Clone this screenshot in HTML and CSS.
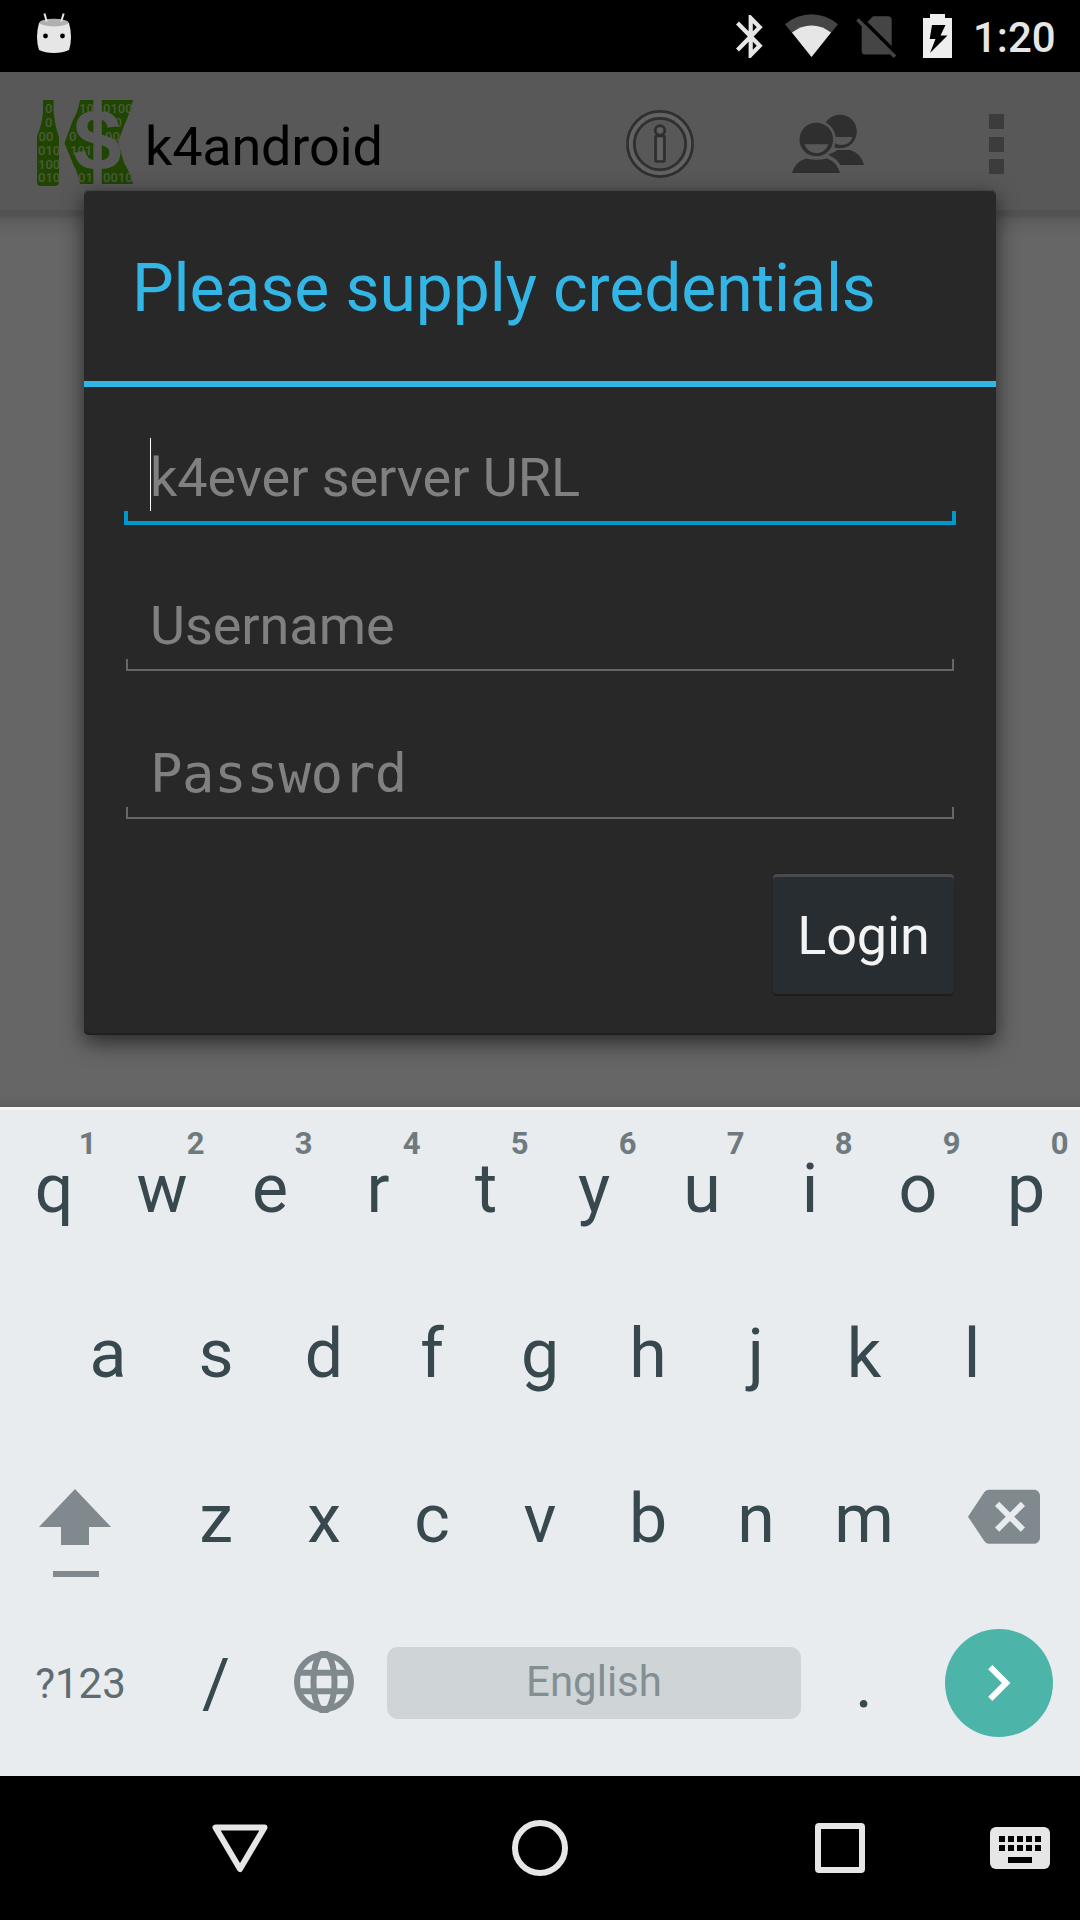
FILE: index.html
```html
<!DOCTYPE html>
<html lang="en">
<head>
<meta charset="utf-8">
<title>k4android</title>
<link rel="stylesheet" href="styles.css">
</head>
<body>
<div class="statusbar">
  <svg class="notification" width="36" height="42" viewBox="36 12 36 42">
    <path d="M39 23Q54 17 69 23Q71 30 71 37Q71 44 69 50Q63 53 54 53Q45 53 39 50Q37 44 37 37Q37 30 39 23Z" fill="#e6e6e6"/>
    <ellipse cx="54" cy="22.6" rx="14.6" ry="3.8" fill="#b0b0b0"/>
    <path d="M44.4 13.5L46.8 21.5M63.7 13.5L61.2 21.5" stroke="#e6e6e6" stroke-width="2"/>
    <circle cx="45.5" cy="36" r="2.4"/><circle cx="62.5" cy="36" r="2.4"/>
  </svg>
  <svg width="28" height="46" viewBox="735 13 28 46">
    <path transform="translate(725.5 10.7) scale(2.1 2.15)" fill="#e6e6e6" d="M17.71 7.71L12 2h-1v7.59L6.41 5 5 6.41 10.59 12 5 17.59 6.41 19 11 14.41V22h1l5.71-5.71-4.3-4.29 4.3-4.29zM13 5.83l1.88 1.88L13 9.59V5.83zm1.88 10.46L13 18.17v-3.76l1.88 1.88z"/>
  </svg>
  <svg class="wifi" width="54" height="46" viewBox="785 13 54 46">
    <path d="M785 24.3Q797 14.3 811.5 14.3Q826 14.3 838 24.3L811.5 57Z" fill="#454545"/>
    <path d="M792 32.6Q801 25.6 811.5 25.6Q822 25.6 831 32.6L811.5 57Z" fill="#e6e6e6"/>
  </svg>
  <svg class="sim" width="42" height="46" viewBox="855 13 42 46">
    <path d="M867.5 22L873 16.3H888Q891.7 16.5 891.7 20V46Z" fill="#454545"/>
    <path d="M861.7 24.5L890.5 54.5H865.5Q861.7 54.5 861.7 51Z" fill="#454545"/>
    <path d="M857.5 19.5L895 56.8" stroke="#454545" stroke-width="3.6"/>
  </svg>
  <svg class="battery" width="30" height="46" viewBox="923 13 30 46">
    <path d="M930 18V14H945V18H952V58H923V18Z" fill="#eee"/>
    <path d="M932 25H945.5L940.5 35.5H947.5L930 53L935.5 39H929.7Z" fill="#000"/>
  </svg>
  <span class="clock">1:20</span>
</div>

<div class="app">
  <header class="appbar">
    <svg class="logo" width="96" height="87" viewBox="37 100 96 87">
      <g fill="#1f4500">
        <path d="M43 100H53.500V112Q55 126 59 138V182Q59 186 54 186H41Q37 186 37 182V136Q42 125 43 112Z"/>
        <path d="M80 100H133Q129 115 124 126L118 142L124 163Q130 172 133 184H80Q77 170 73.500 165L64.500 143L73 120Q78 112 80 100Z"/>
      </g>
      <g class="bits">
        <text x="45" y="113">0</text><text x="45" y="127">0</text><text x="38.500" y="141">00</text>
        <text x="38" y="154.500">010</text><text x="38" y="168.500">100</text><text x="38" y="182">010</text>
        <text x="79" y="113">10</text><text x="103" y="113">0100</text>
        <text x="107" y="127">00</text>
        <text x="69" y="141">0</text><text x="105" y="141">00</text>
        <text x="70" y="154.500">101</text>
        <text x="78" y="182">01</text><text x="103" y="182">0010</text>
      </g>
      <text class="dollar" x="97.500" y="171" text-anchor="middle">$</text>
      <rect x="93.300" y="100" width="8.500" height="86" fill="#585858"/>
    </svg>
    <h1 class="app-name">k4android</h1>
    <div class="actions">
      <svg width="70" height="70" viewBox="625 109 70 70" fill="none" stroke="#2f2f2f">
        <g stroke="#626262" stroke-width="5"><circle cx="660" cy="144" r="30"/><path d="M660 137V160M660 128V132"/></g>
        <g stroke-width="2.700"><circle cx="660" cy="144" r="32.600"/><circle cx="660" cy="144" r="25.600"/>
        <circle cx="660" cy="130.500" r="4.800"/><rect x="655.500" y="136" width="9" height="25.500" rx="1"/></g>
      </svg>
      <svg class="people" width="74" height="60" viewBox="791 114 74 60">
        <g fill="#2f2f2f">
          <circle cx="840" cy="131.500" r="16.800"/>
          <path d="M828 154Q834 153 837 150H850Q861 153 864 165H838Z"/>
        </g>
        <path d="M835.500 137H852.500Q850 145 841 145Q838 145 835 143Z" fill="#585858"/>
        <circle cx="816.300" cy="139.500" r="19.500" fill="#585858"/>
        <path d="M806 155H827Q840 158 843 173H824Z" fill="#585858"/>
        <circle cx="816.300" cy="139.500" r="16.800" fill="#2f2f2f"/>
        <path d="M804.500 144.300H828.500Q825 153.200 816.500 153.200Q808 153.200 804.500 144.300Z" fill="#585858"/>
        <path d="M792 173Q795 162 806 158.500Q816 161 827 158.500Q837 162 840 173Z" fill="#2f2f2f"/>
      </svg>
      <div class="overflow"><i></i><i></i><i></i></div>
    </div>
  </header>
  <main class="content"></main>

  <section class="dialog">
    <h2 class="dialog-title">Please supply credentials</h2>
    <form class="credentials">
      <div class="field focused"><span class="hint">k4ever server URL</span></div>
      <div class="field"><span class="hint">Username</span></div>
      <div class="field"><span class="hint mono">Password</span></div>
      <button class="login" type="button">Login</button>
    </form>
  </section>
</div>

<div class="keyboard">
  <div class="row">
    <span class="key">q<sup>1</sup></span><span class="key">w<sup>2</sup></span><span class="key">e<sup>3</sup></span><span class="key">r<sup>4</sup></span><span class="key">t<sup>5</sup></span><span class="key">y<sup>6</sup></span><span class="key">u<sup>7</sup></span><span class="key">i<sup>8</sup></span><span class="key">o<sup>9</sup></span><span class="key">p<sup>0</sup></span>
  </div>
  <div class="row">
    <span class="key">a</span><span class="key">s</span><span class="key">d</span><span class="key">f</span><span class="key">g</span><span class="key">h</span><span class="key">j</span><span class="key">k</span><span class="key">l</span>
  </div>
  <div class="row">
    <span class="key wide icon">
      <svg width="162" height="165" viewBox="0 1437 162 165" fill="#808a8e"><path d="M75 1489L111 1527H89V1545H61V1527H39Z"/><rect x="53" y="1571" width="46" height="6"/></svg>
    </span>
    <span class="key">z</span><span class="key">x</span><span class="key">c</span><span class="key">v</span><span class="key">b</span><span class="key">n</span><span class="key">m</span>
    <span class="key wide icon">
      <svg width="162" height="165" viewBox="918 1437 162 165"><path transform="translate(968 1480.700) scale(3)" fill="#808a8e" d="M22 3H7c-.69 0-1.230.35-1.590.88L0 12l5.410 8.110c.36.53.9.89 1.590.89h15c1.100 0 2-.9 2-2V5c0-1.100-.9-2-2-2zm-3 12.590L17.590 17 14 13.410 10.410 17 9 15.590 12.590 12 9 8.410 10.410 7 14 10.590 17.590 7 19 8.410 15.410 12 19 15.590z"/></svg>
    </span>
  </div>
  <div class="row">
    <span class="key wide symbols">?123</span>
    <span class="key">/</span>
    <span class="key icon">
      <svg class="globe" width="62" height="62" viewBox="-31 -31 62 62" fill="none" stroke="#808a8e" stroke-width="6"><circle r="27"/><ellipse rx="10.500" ry="29"/><path d="M-26 -9.300H26M-26 9.300H26"/></svg>
    </span>
    <span class="key icon space"><span>English</span></span>
    <span class="key">.</span>
    <span class="key wide icon">
      <span class="enter"><svg width="72" height="72" viewBox="0.200 0 24 24"><path fill="#fff" d="M10 6L8.590 7.410 13.170 12l-4.580 4.590L10 18l6-6z"/></svg></span>
    </span>
  </div>
</div>

<nav class="navbar">
  <svg width="60" height="60" viewBox="210 1818 60 60"><path d="M215.500 1827.500H264.500L240 1869Z" fill="none" stroke="#e6e6e6" stroke-width="6" stroke-linejoin="round"/></svg>
  <svg width="60" height="60" viewBox="-30 -30 60 60"><circle r="25" fill="none" stroke="#e6e6e6" stroke-width="6"/></svg>
  <svg width="60" height="60" viewBox="810 1818 60 60"><rect x="818" y="1826" width="44" height="44" rx="1" fill="none" stroke="#e6e6e6" stroke-width="6" stroke-linejoin="round"/></svg>
  <svg class="ime" width="60" height="42" viewBox="990 1827 60 42"><rect x="990" y="1827" width="60" height="42" rx="6" fill="#e6e6e6"/><path d="M999 1839H1041M999 1848H1041" stroke="#000" stroke-width="6" stroke-dasharray="6 3"/><path d="M1008 1860H1032" stroke="#000" stroke-width="6"/></svg>
</nav>
</body>
</html>
```
FILE: styles.css
```css
*, *::before, *::after { box-sizing: border-box; }

body {
  margin: 0;
  width: 1080px;
  height: 1920px;
  display: flex;
  flex-direction: column;
  overflow: hidden;
  background: #000;
  font-family: Roboto, sans-serif;
}

svg { display: block; flex: none; }
h1, h2 { margin: 0; font-weight: 400; }

/* Status bar */
.statusbar {
  height: 72px;
  padding: 0 25px 0 36px;
  display: flex;
  align-items: center;
  color: #e6e6e6;
}
.notification { margin: -6px auto 0 0; }
.wifi { margin-left: 22px; }
.sim { margin-left: 16px; }
.battery { margin-left: 26px; }
.clock {
  width: 82px;
  margin: 3px 0 0 20px;
  font-size: 42px;
  font-weight: 500;
  line-height: 50px;
  white-space: nowrap;
}

/* Activity behind the dialog */
.app {
  position: relative;
  height: 1035px;
  display: flex;
  flex-direction: column;
  background: #666;
}
.appbar {
  height: 138px;
  padding: 6px 76px 0 37px;
  display: flex;
  align-items: center;
  background: #585858;
}
.logo { margin-top: -1px; }
.app-name {
  margin: 6px 0 0 12px;
  font-size: 54px;
  line-height: 64px;
  letter-spacing: -.2px;
  color: #000;
}
.bits text {
  font: 500 13px Roboto, sans-serif;
  fill: #4b5b3c;
}
.dollar {
  font: bold 87px "Liberation Sans", sans-serif;
  fill: #585858;
}
.actions { margin-left: auto; display: flex; align-items: center; }
.people { margin-left: 96px; }
.overflow { margin-left: 124px; display: grid; gap: 7.5px; }
.overflow i { width: 15px; height: 15px; background: #3c3c3c; }
.content {
  flex: 1;
  background:
    linear-gradient(#525252 0 5px, #5b5b5b 9px, #606060 14px, #666 27px, transparent 27px),
    linear-gradient(to top, #606060, #666 14px);
}

/* Dialog */
.dialog {
  position: absolute;
  left: 84px;
  top: 118px;
  width: 912px;
  height: 845px;
  border-radius: 5px;
  background: #282828;
  box-shadow: 0 7px 22px rgba(0, 0, 0, .62), inset 0 1px #444, inset 0 -2px #202020;
}
.dialog-title {
  height: 197px;
  padding: 7px 48px 0;
  border-bottom: 6px solid #33b5e5;
  font-size: 66px;
  line-height: 183px;
  letter-spacing: -.08px;
  color: #33b5e5;
  white-space: nowrap;
}
.credentials {
  padding: 30px 40px 0;
  display: flex;
  flex-direction: column;
}
.field {
  position: relative;
  height: 108px;
  margin-bottom: 40px;
  padding: 13px 26px 0;
  font-size: 54px;
  line-height: 95px;
  letter-spacing: -.06px;
  color: #808080;
}
.field::after {
  content: "";
  position: absolute;
  left: 2px;
  right: 2px;
  bottom: 2px;
  height: 12px;
  border: 2px solid #666;
  border-top: 0;
}
.focused::after {
  left: 0;
  right: 0;
  bottom: 0;
  height: 14px;
  border-width: 0 4px 4px;
  border-color: #09c;
}
.focused::before {
  content: "";
  position: absolute;
  left: 26px;
  top: 21px;
  width: 1px;
  height: 73px;
  background: #fff;
}
.mono { font-family: "DejaVu Sans Mono", monospace; letter-spacing: -.4px; }
.login {
  align-self: flex-end;
  width: 181px;
  height: 120px;
  margin: 13px 2px 0 0;
  padding: 2px 0 0;
  border: 0;
  border-radius: 4px;
  background: #282d31;
  box-shadow: inset 0 3px #494b4e, 0 2px #1d1d1d, 0 0 0 1px #242424;
  font: 54px Roboto, sans-serif;
  letter-spacing: -.1px;
  color: #f3f3f3;
}

/* Keyboard */
.keyboard {
  height: 669px;
  background: #e8ecef;
  box-shadow: inset 0 3px #f4f6f7;
  color: #37474f;
}
.row { display: flex; justify-content: center; height: 165px; }
.key {
  position: relative;
  width: 108px;
  height: 165px;
  padding-bottom: 2px;
  display: flex;
  align-items: center;
  justify-content: center;
  font-size: 68px;
  line-height: 80px;
  color: #37484e;
}
.key sup {
  position: absolute;
  right: 11.5px;
  top: 19px;
  font-size: 31px;
  font-weight: 700;
  line-height: 36px;
  color: #6f7a80;
}
.wide { width: 162px; }
.icon { padding-bottom: 0; }
.symbols { padding-right: 1px; font-size: 42px; color: #5f6d72; }
.globe { margin: -5px 1px 0 0; }
.space { width: 432px; }
.space span {
  width: 414px;
  height: 72px;
  margin-top: -3px;
  border-radius: 11px;
  background: #cfd4d7;
  font-size: 42px;
  line-height: 69px;
  text-align: center;
  color: #848f93;
}
.enter {
  width: 108px;
  height: 108px;
  margin-top: -3px;
  display: flex;
  align-items: center;
  justify-content: center;
  border-radius: 50%;
  background: #4db4aa;
}

/* Navigation bar */
.navbar {
  height: 144px;
  padding: 0 30px 0 210px;
  display: flex;
  align-items: center;
  gap: 240px;
}
.ime { margin-left: -120px; }
```
